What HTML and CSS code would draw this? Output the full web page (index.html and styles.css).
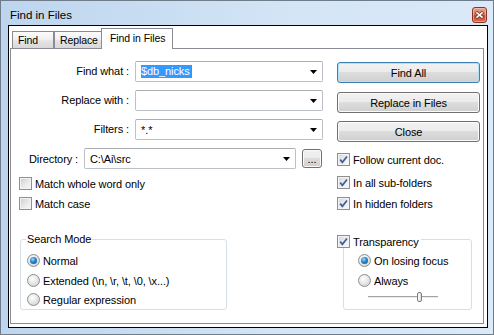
FILE: index.html
```html
<!DOCTYPE html>
<html>
<head>
<meta charset="utf-8">
<title>Find in Files</title>
<link rel="stylesheet" href="styles.css">
</head>
<body>
<div class="window">
  <div class="titlebar">
    <div class="title">Find in Files</div>
    <div class="close">
      <svg width="9" height="8" viewBox="0 0 9 8"><path d="M1 1 L8 7 M8 1 L1 7" stroke="#6a3226" stroke-width="3"/><path d="M1.4 1.3 L7.6 6.7 M7.6 1.3 L1.4 6.7" stroke="#fff" stroke-width="1.6"/></svg>
    </div>
  </div>
  <div class="client">
    <div class="tabs">
      <div class="tab t-find">Find</div>
      <div class="tab t-replace">Replace</div>
      <div class="tab t-active">Find in Files</div>
    </div>
    <div class="panel">
      <div class="col-left">
        <div class="fields">
          <div class="label">Find what :</div>
          <div class="combo"><span class="sel">$db_nicks</span><svg class="arrow" width="7" height="4" viewBox="0 0 7 4"><path d="M0 0 H7 L3.5 4 Z" fill="#000"/></svg></div>
          <div class="label">Replace with :</div>
          <div class="combo"><span></span><svg class="arrow" width="7" height="4" viewBox="0 0 7 4"><path d="M0 0 H7 L3.5 4 Z" fill="#000"/></svg></div>
          <div class="label">Filters :</div>
          <div class="combo"><span class="txt">*.*</span><svg class="arrow" width="7" height="4" viewBox="0 0 7 4"><path d="M0 0 H7 L3.5 4 Z" fill="#000"/></svg></div>
        </div>
        <div class="dir-row">
          <div class="dir-label">Directory :</div>
          <div class="combo dir-combo"><span class="txt">C:\Ai\src</span><svg class="arrow" width="7" height="4" viewBox="0 0 7 4"><path d="M0 0 H7 L3.5 4 Z" fill="#000"/></svg></div>
          <div class="btn dots">...</div>
        </div>
        <div class="check cm1"><span class="cb"></span><span>Match whole word only</span></div>
        <div class="check cm2"><span class="cb"></span><span>Match case</span></div>
        <div class="group mode">
          <div class="group-title">Search Mode</div>
          <div class="radio r1"><span class="rb on"></span><span>Normal</span></div>
          <div class="radio r2"><span class="rb"></span><span>Extended (\n, \r, \t, \0, \x...)</span></div>
          <div class="radio r3"><span class="rb"></span><span>Regular expression</span></div>
        </div>
      </div>
      <div class="col-right">
        <div class="btn big default">Find All</div>
        <div class="btn big b2">Replace in Files</div>
        <div class="btn big b3">Close</div>
        <div class="check c1"><span class="cb on"><svg width="11" height="11" viewBox="0 0 11 11"><path d="M2.2 5.6 L4.4 8.3 L9 2.4" fill="none" stroke="#3f5f9a" stroke-width="1.7"/></svg></span><span>Follow current doc.</span></div>
        <div class="check c2"><span class="cb on"><svg width="11" height="11" viewBox="0 0 11 11"><path d="M2.2 5.6 L4.4 8.3 L9 2.4" fill="none" stroke="#3f5f9a" stroke-width="1.7"/></svg></span><span>In all sub-folders</span></div>
        <div class="check c3"><span class="cb on"><svg width="11" height="11" viewBox="0 0 11 11"><path d="M2.2 5.6 L4.4 8.3 L9 2.4" fill="none" stroke="#3f5f9a" stroke-width="1.7"/></svg></span><span>In hidden folders</span></div>
        <div class="twrap">
          <div class="check tcheck"><span class="cb on"><svg width="11" height="11" viewBox="0 0 11 11"><path d="M2.2 5.6 L4.4 8.3 L9 2.4" fill="none" stroke="#3f5f9a" stroke-width="1.7"/></svg></span><span>Transparency</span></div>
          <div class="group tbox">
            <div class="radio"><span class="rb on"></span><span>On losing focus</span></div>
            <div class="radio r2"><span class="rb"></span><span>Always</span></div>
            <div class="slider"><span class="thumb"></span></div>
          </div>
        </div>
      </div>
    </div>
  </div>
</div>
</body>
</html>
```

FILE: styles.css
```css
* { box-sizing: border-box; }
html, body { margin: 0; padding: 0; }
body {
  width: 494px;
  height: 335px;
  overflow: hidden;
  background: #fff;
  font-family: "Liberation Sans", Arial, sans-serif;
  font-size: 11px;
  letter-spacing: -0.1px;
  color: #000;
}
.window {
  width: 494px;
  height: 335px;
  border: 1px solid #6f7c8a;
  background: linear-gradient(to right, #bdd5ee, #d4e5f6 60%, #dbe9f8);
  display: flex;
  flex-direction: column;
}
.titlebar {
  height: 24px;
  flex: none;
  display: flex;
  justify-content: space-between;
  align-items: flex-start;
  padding-left: 9px;
}
.title {
  font-size: 11.5px;
  letter-spacing: 0;
  line-height: 14px;
  margin-top: 7px;
  color: #000;
}
.close {
  width: 15px;
  height: 16px;
  margin: 6px 6px 0 0;
  border: 1px solid #8a3526;
  border-radius: 3px;
  background: linear-gradient(#eba592 0%, #dc735b 45%, #c9472c 55%, #d7704f 100%);
  box-shadow: inset 0 0 0 1px rgba(255, 220, 200, 0.45);
  display: flex;
  align-items: center;
  justify-content: center;
}
.client {
  flex: 1;
  margin: 0 5px 6px 7px;
  border: 1px solid #000;
  background: #fff;
  padding: 2px 3px 3px 1px;
  display: flex;
  flex-direction: column;
}
.tabs {
  height: 20px;
  flex: none;
  display: flex;
  align-items: flex-end;
  padding-left: 2px;
}
.tab {
  height: 17px;
  border: 1px solid #898c95;
  border-bottom: none;
  background: linear-gradient(#fbfbfb, #f0f0f0 45%, #e4e4e4 55%, #d8d8d8);
  font-size: 10.5px;
  letter-spacing: -0.1px;
  line-height: 16px;
  padding-left: 5px;
  white-space: nowrap;
}
.t-find { width: 42px; }
.t-replace { width: 48px; }
.t-active {
  width: 72px;
  height: 21px;
  margin-left: -1px;
  margin-bottom: -1px;
  background: #fff;
  line-height: 18px;
  padding-left: 8px;
  position: relative;
  z-index: 1;
}
.panel {
  flex: 1;
  border: 1px solid #898c95;
  display: flex;
  align-items: flex-start;
  gap: 14px;
  padding: 12px 3px 0 8px;
}
.col-left { width: 304px; flex: none; display: flex; flex-direction: column; }
.col-right { width: 143px; flex: none; display: flex; flex-direction: column; padding-top: 1px; }

.fields {
  display: grid;
  grid-template-columns: 116px 188px;
  grid-auto-rows: 21px;
  row-gap: 8px;
}
.label {
  text-align: right;
  padding-right: 6px;
  line-height: 21px;
  white-space: nowrap;
}
.combo {
  height: 21px;
  border: 1px solid #bcc0c7;
  border-top-color: #abadb3;
  border-radius: 2px;
  background: #fff;
  display: flex;
  align-items: center;
  padding-left: 5px;
  white-space: nowrap;
}
.combo .arrow { margin-left: auto; margin-right: 5px; flex: none; }
.sel {
  background: #3399ff;
  color: #fff;
  height: 13px;
  line-height: 13px;
  padding: 0 1px 0 0;
  border-right: 1px solid #b7743f;
}
.dir-row {
  margin-top: 8px;
  display: flex;
  align-items: center;
  height: 21px;
  padding-left: 10px;
}
.dir-label { width: 55px; flex: none; white-space: nowrap; }
.dir-combo { width: 212px; flex: none; }
.btn {
  border: 1px solid #707070;
  border-radius: 3px;
  background: linear-gradient(#f2f2f2 0%, #ebebeb 50%, #dddddd 50%, #cfcfcf 100%);
  box-shadow: inset 0 0 0 1px #fbfbfb;
  display: flex;
  align-items: center;
  justify-content: center;
  white-space: nowrap;
}
.dots {
  width: 20px;
  height: 19px;
  margin-left: 6px;
  flex: none;
  padding-top: 1px;
}
.big { height: 21px; }
.default {
  border-color: #3c7fb1;
  box-shadow: inset 0 0 0 1px #b3e1f7;
}
.b2 { margin-top: 9px; }
.b3 { margin-top: 8px; }

.check {
  display: flex;
  align-items: center;
  gap: 3px;
  height: 13px;
  white-space: nowrap;
}
.cm1 { margin-top: 8px; }
.cm2 { margin-top: 7px; }
.c1 { margin-top: 11px; }
.c2 { margin-top: 10px; }
.c3 { margin-top: 8px; }
.cb {
  width: 13px;
  height: 13px;
  flex: none;
  border: 1px solid #8e8f8f;
  background: linear-gradient(135deg, #c9ccd1, #ebecee 60%, #f7f7f7);
  box-shadow: inset 0 0 0 1px #f3f3f3;
  display: flex;
}
.cb.on { background: linear-gradient(135deg, #d3d6db, #eeeff1 60%, #fafafa); }

.group {
  border: 1px solid #d5dfe5;
  border-radius: 3px;
  height: 71px;
}
.mode {
  margin-top: 29px;
  margin-left: 1px;
  width: 207px;
  padding-left: 6px;
}
.group-title {
  width: fit-content;
  margin: -8px 0 0 -1px;
  padding: 0 1px;
  background: #fff;
  line-height: 14px;
}
.radio {
  display: flex;
  align-items: center;
  gap: 3px;
  height: 13px;
  white-space: nowrap;
}
.mode .r1 { margin-top: 8px; }
.mode .r2 { margin-top: 7px; }
.mode .r3 { margin-top: 6px; }
.rb {
  width: 13px;
  height: 13px;
  flex: none;
  border-radius: 50%;
  border: 1px solid #8e8f8f;
  background: radial-gradient(circle at 40% 35%, #ffffff 0%, #e8e8e8 45%, #c9c9c9 100%);
  display: flex;
  align-items: center;
  justify-content: center;
}
.rb.on::after {
  content: "";
  width: 7px;
  height: 7px;
  border-radius: 50%;
  background: radial-gradient(circle at 40% 35%, #9be0ff 0%, #2b8ad0 40%, #0d4a86 100%);
}

.twrap { margin-top: 25px; display: flex; flex-direction: column; }
.tcheck {
  position: relative;
  z-index: 1;
  width: fit-content;
  background: #fff;
  padding-right: 2px;
}
.tbox {
  margin-top: -9px;
  margin-left: 6px;
  width: 129px;
  padding: 14px 0 0 14px;
}
.tbox .r2 { margin-top: 7px; }
.slider {
  margin-top: 5px;
  margin-left: 10px;
  width: 70px;
  height: 10px;
  display: flex;
  background: linear-gradient(to bottom, transparent 4px, #a3a3a3 4px, #a3a3a3 5px, #ececec 5px, #ececec 6px, transparent 6px);
}
.thumb {
  width: 5px;
  height: 10px;
  margin-left: 49px;
  border: 1px solid #7d7d7d;
  border-radius: 2px;
  background: linear-gradient(to right, #ffffff, #dcdcdc);
}
```
